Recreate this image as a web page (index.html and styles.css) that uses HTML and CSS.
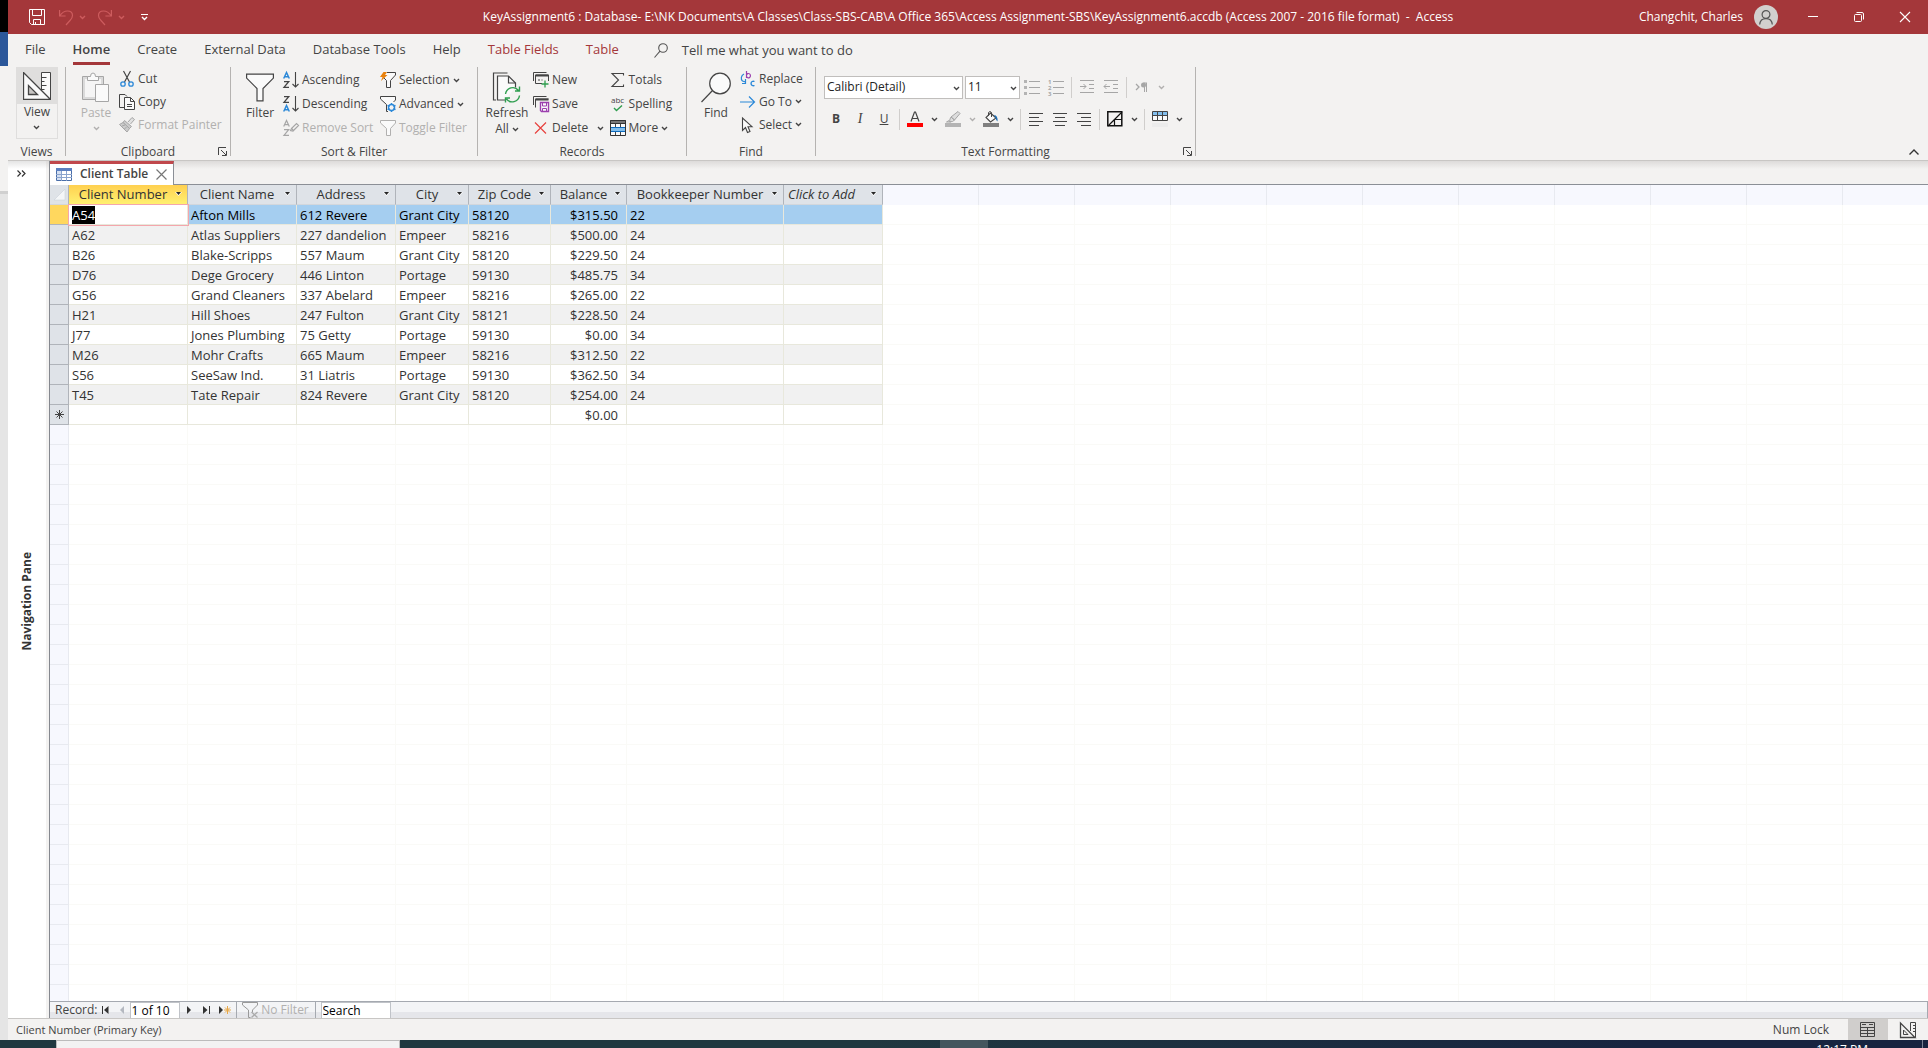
FILE: index.html
```html
<!DOCTYPE html>
<html lang="en">
<head>
    <meta charset="UTF-8">
    <meta name="viewport" content="width=device-width, initial-scale=1.0">
    <title>KeyAssignment6 : Database - Access</title>
    <link rel="stylesheet" href="styles.css">
</head>
<body>
    <!-- shared icons -->
    <svg class="symbols" aria-hidden="true">
        <symbol id="chevron" viewBox="0 0 7 5"><path d="M1 1l2.500 2.500L6 1" fill="none" stroke="currentColor" stroke-width="1.400"/></symbol>
        <symbol id="launcher" viewBox="0 0 9 9"><path d="M.5 8V.5H8M3 3l5 5M8.500 4v4.500H4" fill="none" stroke="currentColor"/></symbol>
        <symbol id="funnel" viewBox="0 0 16 16"><path d="M.5.500h15v2.500l-5 5.500V15.500h-4V8.500l-6-5.500z" fill="#fafafa" stroke="currentColor"/></symbol>
        <symbol id="drop" viewBox="0 0 7 4"><path d="M0 0h7L3.500 4z" fill="#fff"/><path d="M1 0h5L3.500 3z" fill="#262626"/></symbol>
        <symbol id="design" viewBox="0 0 28 28">
            <path d="M18.500.500h9v27h-9z" fill="#fafafa" stroke="currentColor"/>
            <path d="M18.500 5.500h5M18.500 9.500h3M18.500 13.500h5M18.500 17.500h3" stroke="currentColor"/>
            <path d="M.5.500v27h27z" fill="#fafafa" stroke="currentColor" stroke-width="1.300"/>
            <path d="M5.500 13.500v9h9z" fill="#c8c6c4" stroke="currentColor" stroke-width="1.300"/>
        </symbol>
    </svg>

    <div class="screen">
        <div class="behind">
            <div class="behind-title"></div>
            <div class="behind-tab"></div>
            <div class="behind-ribbon"></div>
        </div>

        <div class="app">
            <header class="titlebar">
                <div class="quick-access">
                    <button class="qa-save" aria-label="Save"><svg width="16" height="16" viewBox="0 0 16 16" fill="none" stroke="#fff"><path d="M.5.500h15v15h-13l-2-2z"/><path d="M3.500.500v6h9v-6M4.500 15.500v-5h7v5M6.500 13v2.500"/></svg></button>
                    <button class="qa-undo" aria-label="Undo"><svg width="14" height="17" viewBox="0 0 14 17" fill="none" stroke="#cd5c5e" stroke-width="1.200"><path d="M.6 1v6h6M1 6.500C3 3.500 5.500 2 8.500 2c3.200 0 5 2 5 4.500 0 2-1 3.500-2.500 5L7 16"/></svg></button>
                    <button class="qa-arrow faded" aria-label="Undo list"><svg width="7" height="5"><use href="#chevron"/></svg></button>
                    <button class="qa-undo" aria-label="Redo"><svg width="14" height="17" viewBox="0 0 14 17" fill="none" stroke="#cd5c5e" stroke-width="1.200"><path d="M13.400 1v6h-6M13 6.500C11 3.500 8.500 2 5.500 2c-3.200 0-5 2-5 4.500 0 2 1 3.500 2.500 5L7 16"/></svg></button>
                    <button class="qa-arrow faded" aria-label="Redo list"><svg width="7" height="5"><use href="#chevron"/></svg></button>
                    <button class="qa-more" aria-label="Customize Quick Access Toolbar"><svg width="7" height="7" viewBox="0 0 7 7"><path d="M0 .5h7" stroke="#fff"/><path d="M1 3l2.500 2.500L6 3" fill="none" stroke="#fff" stroke-width="1.400"/></svg></button>
                </div>
                <h1>KeyAssignment6 : Database- E:\NK Documents\A Classes\Class-SBS-CAB\A Office 365\Access Assignment-SBS\KeyAssignment6.accdb (Access 2007 - 2016 file format) &nbsp;- &nbsp;Access</h1>
                <div class="window-controls">
                    <span class="user-name">Changchit, Charles</span>
                    <span class="avatar"><svg width="14" height="15" viewBox="0 0 14 15" fill="none" stroke="#555" stroke-width="1.200"><circle cx="7" cy="4.500" r="3.900"/><path d="M.7 14.500C1 11 3.500 8.600 7 8.600s6 2.400 6.300 5.900"/></svg></span>
                    <button aria-label="Minimize"><svg width="10" height="10" viewBox="0 0 10 10"><path d="M0 4.500h10" stroke="#fff"/></svg></button>
                    <button aria-label="Restore"><svg width="10" height="10" viewBox="0 0 10 10" fill="none" stroke="#fff"><rect x=".5" y="2.500" width="7" height="7" rx="1"/><path d="M2.500.500h5.500q1.500 0 1.500 1.500v5.500"/></svg></button>
                    <button aria-label="Close"><svg width="10" height="10" viewBox="0 0 10 10"><path d="M0 0l10 10M10 0L0 10" stroke="#fff" stroke-width="1.100"/></svg></button>
                </div>
            </header>

            <nav class="ribbon-tabs">
                <a href="#">File</a>
                <a href="#" class="active">Home</a>
                <a href="#">Create</a>
                <a href="#">External Data</a>
                <a href="#">Database Tools</a>
                <a href="#">Help</a>
                <a href="#" class="contextual">Table Fields</a>
                <a href="#" class="contextual">Table</a>
                <a href="#" class="tell-me"><svg width="14" height="15" viewBox="0 0 14 15" fill="none" stroke="#555" stroke-width="1.100"><circle cx="9" cy="5" r="4.300"/><path d="M6 8.200L.5 14.500"/></svg>Tell me what you want to do</a>
            </nav>

            <div class="ribbon">
                <section class="group views">
                    <div class="tools">
                        <button class="view-button">
                            <span class="view-icon"><svg width="28" height="28"><use href="#design"/></svg></span>
                            <span class="view-text">View<svg width="7" height="5"><use href="#chevron"/></svg></span>
                        </button>
                    </div>
                    <h2>Views</h2>
                </section>

                <section class="group clipboard">
                    <div class="tools">
                        <button class="big disabled">
                            <svg width="28" height="31" viewBox="0 0 28 31" stroke="#a6a6a6"><path d="M.5 4.500h21v23H.5z" fill="#dadada"/><path d="M3 7h16v18H3z" fill="#f5f5f5" stroke="none"/><path d="M5.500 8.500v-4h3q0-3.500 2.500-3.500t2.500 3.500h3v4z" fill="#fafafa"/><path d="M13.500 12.500h13v17h-13z" fill="#fafafa"/></svg>
                            <span>Paste</span>
                            <svg class="below" width="7" height="5"><use href="#chevron"/></svg>
                        </button>
                        <div class="stack tight">
                            <button><svg width="16" height="16" viewBox="0 0 16 16" fill="none"><path d="M4.500 0l6 11M11.500 0l-6 11" stroke="#444" stroke-width="1.200"/><circle cx="4" cy="13" r="2.200" stroke="#2b88d8" stroke-width="1.300"/><circle cx="12" cy="13" r="2.200" stroke="#2b88d8" stroke-width="1.300"/></svg>Cut</button>
                            <button><svg width="16" height="16" viewBox="0 0 16 16" stroke="#444"><path d="M5 13.500H.5V.5H6l2 2" fill="none"/><path d="M5.500 3.500h6l4 4v8h-10z" fill="#fafafa"/><path d="M11.500 3.500v4h4M8 10.500h5M8 12.500h5" fill="none"/></svg>Copy</button>
                            <button class="disabled"><svg width="16" height="16" viewBox="0 0 16 16" stroke="#a6a6a6"><path d="M9 5l4-4.500 2.500 2L11.500 7" fill="#e0e0e0"/><path d="M5.500 3.500l7 6-2 2-6.500-6z" fill="#ccc"/><path d="M4 5.500L.5 7.500 8 15l2.500-3.500z" fill="#ccc"/><path d="M3 9l3-1M5.500 11.500l2-1"/></svg>Format Painter</button>
                        </div>
                    </div>
                    <h2>Clipboard</h2>
                    <button class="launch" aria-label="Clipboard pane"><svg width="9" height="9"><use href="#launcher"/></svg></button>
                </section>

                <section class="group sort">
                    <div class="tools">
                        <button class="big">
                            <svg width="28" height="28" viewBox="0 0 28 28"><path d="M.6.600h26.800v4L17 15v12.400h-6V15L.6 4.600z" fill="#fafafa" stroke="#444" stroke-width="1.200"/></svg>
                            <span>Filter</span>
                        </button>
                        <div class="stack">
                            <button><svg width="16" height="16" viewBox="0 0 16 16" fill="none"><path d="M.7 6.500L3.500.500l2.800 6M1.500 4.700h4" stroke="#2b88d8" stroke-width="1.500"/><path d="M1 9.700h4.700L1 15.300h5" stroke="#444" stroke-width="1.300"/><path d="M12.500 0v15M9.500 12l3 3 3-3" stroke="#444" stroke-width="1.100"/></svg>Ascending</button>
                            <button><svg width="16" height="16" viewBox="0 0 16 16" fill="none"><path d="M1 .7h4.700L1 6.300h5" stroke="#444" stroke-width="1.300"/><path d="M.7 15.500l2.800-6 2.800 6M1.500 13.700h4" stroke="#2b88d8" stroke-width="1.500"/><path d="M12.500 0v15M9.500 12l3 3 3-3" stroke="#444" stroke-width="1.100"/></svg>Descending</button>
                            <button class="disabled"><svg width="16" height="16" viewBox="0 0 16 16" fill="none" stroke="#a6a6a6" stroke-width="1.200"><path d="M.7 6.500L3.500.500l2.800 6M1.500 4.700h4M1 9.700h4.700L1 15.300h5"/><path d="M8.500 8.500l5-5 2 2-5.500 5.500-2.500-.5z"/><path d="M8.500 8.500l2 2" /></svg>Remove Sort</button>
                        </div>
                        <div class="stack">
                            <button><svg width="16" height="16" viewBox="0 0 16 16"><path d="M7 .5h8.500v2.500l-5 5.500v7h-4v-7L4 6" fill="#fafafa" stroke="#444"/><path d="M3.500 0h3.500L5 3h2.500L1 9l1.500-4H0z" fill="#e8810c"/></svg>Selection<svg class="arrow" width="7" height="5"><use href="#chevron"/></svg></button>
                            <button><svg width="16" height="16" viewBox="0 0 16 16"><path d="M8 15.500H6.500V8.500L.5 3V.5h15V4l-2 2" fill="#fafafa" stroke="#444"/><circle cx="11.500" cy="11.500" r="3" fill="none" stroke="#2b88d8" stroke-width="1.500"/><path d="M11.500 7v2M11.500 14v2M7.500 9.300l2 1M13.500 12.700l2 1M7.500 13.700l2-1M13.500 10.300l2-1" stroke="#2b88d8" stroke-width="1.500"/></svg>Advanced<svg class="arrow" width="7" height="5"><use href="#chevron"/></svg></button>
                            <button class="disabled"><svg width="16" height="16"><use href="#funnel"/></svg>Toggle Filter</button>
                        </div>
                    </div>
                    <h2>Sort &amp; Filter</h2>
                </section>

                <section class="group records">
                    <div class="tools">
                        <button class="big refresh">
                            <svg width="28" height="30" viewBox="0 0 28 30" fill="none"><path d="M3 27.500H.5V.5h14" stroke="#444" stroke-width="1.200"/><path d="M12 27.500H4.500v-24h11l7 7V15" fill="#fafafa" stroke="#444" stroke-width="1.200"/><path d="M15.500 3.500v7h7" stroke="#444" stroke-width="1.200"/><path d="M12.500 21.500a7.300 7.300 0 0 1 13-3.500M26.500 23a7.300 7.300 0 0 1-13 3.500M26.500 14v4.500H22M12.500 30v-4.500H17" stroke="#2f9e4f" stroke-width="1.400"/></svg>
                            <span>Refresh</span>
                            <span>All<svg width="7" height="5"><use href="#chevron"/></svg></span>
                        </button>
                        <div class="stack">
                            <button><svg width="16" height="16" viewBox="0 0 16 16" fill="none"><path d="M.5 9V.5h13M2.500 11.500v-8.500h13V9" stroke="#444"/><path d="M2.500 3.500h13" stroke="#444" stroke-width="2"/><path d="M9 11.500H2.500M5 8h2M8.500 8h1" stroke="#444"/><path d="M12 8.500v7M8.500 12h7" stroke="#2f9e4f" stroke-width="1.300"/></svg>New</button>
                            <button><svg width="16" height="16" viewBox="0 0 16 16" fill="none"><path d="M.5 9V.5h13M2.500 11.500v-8.500h13" stroke="#444"/><path d="M2.500 3.500h13" stroke="#444" stroke-width="2"/><path d="M7.500 6.500h8v9h-7l-1-1z" fill="#fafafa" stroke="#9b3fae" stroke-width="1.400"/><path d="M9.500 6.500V10h4V6.500M9.500 15v-2.500h4V15" stroke="#9b3fae"/></svg>Save</button>
                            <button><svg width="16" height="16" viewBox="0 0 16 16"><path d="M2 2.500l11 11M13 2.500l-11 11" stroke="#e8433f" stroke-width="1.200"/></svg>Delete<svg class="arrow wide" width="7" height="5"><use href="#chevron"/></svg></button>
                        </div>
                        <div class="stack">
                            <button><svg width="16" height="16" viewBox="0 0 16 16"><path d="M13.500 3.500V1.500H2L8.500 8 2 14.500h11.500v-2" fill="none" stroke="#444" stroke-width="1.100"/></svg>Totals</button>
                            <button><svg width="16" height="16" viewBox="0 0 16 16"><text x="1" y="7" font-size="8" fill="#444">abc</text><path d="M4 12l2.500 2.500L12 9.500" fill="none" stroke="#2f9e4f" stroke-width="1.400"/></svg>Spelling</button>
                            <button><svg width="16" height="16" viewBox="0 0 16 16"><path d="M.5.500h15v15H.5z" fill="#fafafa"/><path d="M0 0h16v3.500H0z" fill="#777"/><path d="M5.500 3.500v12M10.500 3.500v12" stroke="#444"/><path d="M1 7.700h14v3.500H1z" fill="#83beec"/><path d="M0 7.500h16M0 11.500h16" stroke="#0f6cbd"/><path d="M.5.500h15v15H.5zM.5 3.500h15" fill="none" stroke="#333"/></svg>More<svg class="arrow" width="7" height="5"><use href="#chevron"/></svg></button>
                        </div>
                    </div>
                    <h2>Records</h2>
                </section>

                <section class="group find">
                    <div class="tools">
                        <button class="big">
                            <svg width="30" height="30" viewBox="0 0 30 30" stroke="#444" stroke-width="1.200"><circle cx="19" cy="11" r="10.300" fill="#fafafa"/><path d="M11.500 18L.5 29.500"/></svg>
                            <span>Find</span>
                        </button>
                        <div class="stack tight">
                            <button><svg width="16" height="16" viewBox="0 0 16 16" fill="none"><path d="M6.500 0v7M6.500 4.200a2 2.200 0 1 1 0 1" stroke="#9b3fae" stroke-width="1.200"/><path d="M14.500 10.500a2.300 2.300 0 1 0 0 4" stroke="#2b88d8" stroke-width="1.400"/><path d="M4 3C1 4.500.5 8 2.500 10l3 1M5.500 8v4.500H2" stroke="#2b88d8" stroke-width="1.200"/></svg>Replace</button>
                            <button><svg width="16" height="16" viewBox="0 0 16 16"><path d="M0 8h14.500M9 2.500L14.500 8 9 13.500" fill="none" stroke="#2b88d8" stroke-width="1.200"/></svg>Go To<svg class="arrow" width="7" height="5"><use href="#chevron"/></svg></button>
                            <button><svg width="16" height="16" viewBox="0 0 16 16"><path d="M2.500 1v12.500l3-3 2 5 2.500-1-2-4.800h4z" fill="#fafafa" stroke="#444" stroke-width="1.100"/></svg>Select<svg class="arrow" width="7" height="5"><use href="#chevron"/></svg></button>
                        </div>
                    </div>
                    <h2>Find</h2>
                </section>

                <section class="group formatting">
                    <div class="tools format-tools">
                        <div class="format-row">
                            <label class="combo font-name"><select aria-label="Font"><option>Calibri (Detail)</option></select><svg width="7" height="5"><use href="#chevron"/></svg></label>
                            <label class="combo font-size"><select aria-label="Font size"><option>11</option></select><svg width="7" height="5"><use href="#chevron"/></svg></label>
                            <button class="disabled" aria-label="Bullets"><svg width="16" height="16" viewBox="0 0 16 16"><path d="M5 2.500h11M5 8.500h11M5 14.500h11" stroke="#a6a6a6"/><path d="M0 1h3v3H0zM0 7h3v3H0zM0 13h3v3H0z" fill="#b4b4b4"/></svg></button>
                            <button class="disabled" aria-label="Numbering"><svg width="16" height="16" viewBox="0 0 16 16"><path d="M5 2.500h11M5 8.500h11M5 14.500h11" stroke="#a6a6a6"/><g font-size="6" font-weight="bold" fill="#a6a6a6"><text x="0" y="5">1</text><text x="0" y="11">2</text><text x="0" y="17">3</text></g></svg></button>
                            <i class="rule"></i>
                            <button class="disabled" aria-label="Increase indent"><svg width="14" height="14" viewBox="0 0 14 14" fill="none" stroke="#a6a6a6"><path d="M0 .5h14M9 4.500h5M9 8.500h5M0 12.500h14M0 6.500h6M3.500 4L6 6.500 3.500 9"/></svg></button>
                            <button class="disabled" aria-label="Decrease indent"><svg width="14" height="14" viewBox="0 0 14 14" fill="none" stroke="#a6a6a6"><path d="M0 .5h14M9 4.500h5M9 8.500h5M0 12.500h14M0 6.500h6M2.500 4L0 6.500 2.500 9"/></svg></button>
                            <i class="rule"></i>
                            <button class="disabled" aria-label="Text direction"><svg width="14" height="10" viewBox="0 0 14 10"><path d="M1 2l3 3-3 3" fill="none" stroke="#a6a6a6" stroke-width="1.300"/><path d="M8.500 1H12M9.500 1v9M11.500 1v9" stroke="#a6a6a6"/><circle cx="8.500" cy="3" r="2.500" fill="#a6a6a6"/></svg></button>
                            <button class="pick disabled" aria-label="Text direction list"><svg width="7" height="5"><use href="#chevron"/></svg></button>
                        </div>
                        <div class="format-row">
                            <button aria-label="Bold"><b>B</b></button>
                            <button aria-label="Italic"><em>I</em></button>
                            <button aria-label="Underline"><u>U</u></button>
                            <i class="rule"></i>
                            <button aria-label="Font color"><svg width="16" height="16" viewBox="0 0 16 16"><path d="M4 10.500L7.500 1h1L12 10.500M5 7.500h6" fill="none" stroke="#444" stroke-width="1.200"/><path d="M0 12h16v4H0z" fill="#f00"/></svg></button>
                            <button class="pick" aria-label="Font color list"><svg width="7" height="5"><use href="#chevron"/></svg></button>
                            <button class="disabled" aria-label="Highlight"><svg width="16" height="16" viewBox="0 0 16 16"><path d="M6 6l7-5.500 2 2L9.500 9zM6 6l3.500 3-2 1.500-3 .3L5 8zM4 9.500L1.500 11H6" fill="#ddd" stroke="#a6a6a6"/><path d="M0 12h16v4H0z" fill="#b4b4b4"/></svg></button>
                            <button class="pick disabled" aria-label="Highlight list"><svg width="7" height="5"><use href="#chevron"/></svg></button>
                            <button aria-label="Background color"><svg width="16" height="16" viewBox="0 0 16 16"><path d="M7.500 2L13 7l-5.500 4L3 6.500z" fill="#fafafa" stroke="#444" stroke-width="1.100"/><path d="M5.500 5V1.500q1.500-2 3 0V6" fill="none" stroke="#444"/><path d="M11 4q4 0 3.500 6.500-1.500-1-2-3.500z" fill="#1f6fb5"/><path d="M0 12h16v4H0z" fill="#808080"/></svg></button>
                            <button class="pick" aria-label="Background color list"><svg width="7" height="5"><use href="#chevron"/></svg></button>
                            <i class="rule"></i>
                            <button aria-label="Align left"><svg width="14" height="13" viewBox="0 0 14 13" stroke="#444"><path d="M0 .5h14M0 4.500h10M0 8.500h14M0 12.500h10"/></svg></button>
                            <button aria-label="Center"><svg width="14" height="13" viewBox="0 0 14 13" stroke="#444"><path d="M0 .5h14M2 4.500h10M0 8.500h14M2 12.500h10"/></svg></button>
                            <button aria-label="Align right"><svg width="14" height="13" viewBox="0 0 14 13" stroke="#444"><path d="M0 .5h14M4 4.500h10M0 8.500h14M4 12.500h10"/></svg></button>
                            <i class="rule"></i>
                            <button aria-label="Gridlines"><svg width="16" height="16" viewBox="0 0 16 16" fill="none" stroke="#111"><path d="M.8.800h14v14H.8z" stroke-width="1.500"/><path d="M1 15L15 1M7.500 8v7M7.500 8.500H15" stroke-width="1.200"/></svg></button>
                            <button class="pick" aria-label="Gridlines list"><svg width="7" height="5"><use href="#chevron"/></svg></button>
                            <i class="rule"></i>
                            <button aria-label="Alternate row color"><svg width="16" height="16" viewBox="0 0 16 16"><path d="M.5 1h15v9H.5z" fill="#fafafa"/><path d="M0 1h16v4H0z" fill="#83beec"/><path d="M.5.500h15v9H.5zM.5 4.500h15M5.500.500v9M10.500.500v9" fill="none" stroke="#444"/><path d="M0 12h16v4H0z" fill="#ececec"/></svg></button>
                            <button class="pick" aria-label="Alternate row color list"><svg width="7" height="5"><use href="#chevron"/></svg></button>
                        </div>
                    </div>
                    <h2>Text Formatting</h2>
                    <button class="launch" aria-label="Datasheet formatting"><svg width="9" height="9"><use href="#launcher"/></svg></button>
                </section>

                <button class="collapse" aria-label="Collapse the ribbon"><svg width="10" height="6" viewBox="0 0 10 6"><path d="M.5 5.500L5 1l4.500 4.500" fill="none" stroke="#333" stroke-width="1.400"/></svg></button>
            </div>

            <main class="workspace">
                <aside class="nav-pane">
                    <button aria-label="Open navigation pane"><svg width="9" height="7" viewBox="0 0 9 7"><path d="M.5.500l3 3-3 3M5 .5l3 3-3 3" fill="none" stroke="#333" stroke-width="1.200"/></svg></button>
                    <div class="nav-title"><span>Navigation Pane</span></div>
                </aside>

                <div class="document">
                    <div class="doc-tabs">
                        <div class="doc-tab">
                            <svg width="16" height="13" viewBox="0 0 16 13"><path d="M.5.500h15v12H.5z" fill="#fff" stroke="#4a6ea8"/><path d="M0 0h16v3H0z" fill="#5b7fc0"/><path d="M1 3h4v9H1z" fill="#d5e0f2"/><path d="M0 6.500h16M0 9.500h16M5.500 3v10M10.500 3v10" stroke="#8aa3cd"/></svg>
                            <span>Client Table</span>
                            <button aria-label="Close Client Table"><svg width="11" height="11" viewBox="0 0 11 11"><path d="M.5.500l10 10M10.500.500l-10 10" stroke="#777" stroke-width="1.200"/></svg></button>
                        </div>
                    </div>

                    <div class="datasheet">
                        <div class="sheet-top">
                            <table>
                                <colgroup>
                                    <col class="c-select"><col class="c-number"><col class="c-name"><col class="c-address"><col class="c-city"><col class="c-zip"><col class="c-balance"><col class="c-keeper"><col class="c-add">
                                </colgroup>
                                <thead>
                                    <tr>
                                        <th class="corner"><svg width="11" height="11" viewBox="0 0 11 11"><path d="M11 0v11H0z" fill="#f4f6f8" stroke="#c4ccd6" stroke-width=".5"/></svg></th>
                                        <th class="current"><div><span>Client Number</span><svg width="7" height="4"><use href="#drop"/></svg></div></th>
                                        <th><div><span>Client Name</span><svg width="7" height="4"><use href="#drop"/></svg></div></th>
                                        <th><div><span>Address</span><svg width="7" height="4"><use href="#drop"/></svg></div></th>
                                        <th><div><span>City</span><svg width="7" height="4"><use href="#drop"/></svg></div></th>
                                        <th><div><span>Zip Code</span><svg width="7" height="4"><use href="#drop"/></svg></div></th>
                                        <th><div><span>Balance</span><svg width="7" height="4"><use href="#drop"/></svg></div></th>
                                        <th><div><span>Bookkeeper Number</span><svg width="7" height="4"><use href="#drop"/></svg></div></th>
                                        <th class="add"><div><span>Click to Add</span><svg width="7" height="4"><use href="#drop"/></svg></div></th>
                                    </tr>
                                </thead>
                                <tbody>
                                    <tr class="selected"><th></th><td class="editing"><mark>A54</mark></td><td>Afton Mills</td><td>612 Revere</td><td>Grant City</td><td>58120</td><td class="money">$315.50</td><td>22</td><td></td></tr>
                                    <tr><th></th><td>A62</td><td>Atlas Suppliers</td><td>227 dandelion</td><td>Empeer</td><td>58216</td><td class="money">$500.00</td><td>24</td><td></td></tr>
                                    <tr><th></th><td>B26</td><td>Blake-Scripps</td><td>557 Maum</td><td>Grant City</td><td>58120</td><td class="money">$229.50</td><td>24</td><td></td></tr>
                                    <tr><th></th><td>D76</td><td>Dege Grocery</td><td>446 Linton</td><td>Portage</td><td>59130</td><td class="money">$485.75</td><td>34</td><td></td></tr>
                                    <tr><th></th><td>G56</td><td>Grand Cleaners</td><td>337 Abelard</td><td>Empeer</td><td>58216</td><td class="money">$265.00</td><td>22</td><td></td></tr>
                                    <tr><th></th><td>H21</td><td>Hill Shoes</td><td>247 Fulton</td><td>Grant City</td><td>58121</td><td class="money">$228.50</td><td>24</td><td></td></tr>
                                    <tr><th></th><td>J77</td><td>Jones Plumbing</td><td>75 Getty</td><td>Portage</td><td>59130</td><td class="money">$0.00</td><td>34</td><td></td></tr>
                                    <tr><th></th><td>M26</td><td>Mohr Crafts</td><td>665 Maum</td><td>Empeer</td><td>58216</td><td class="money">$312.50</td><td>22</td><td></td></tr>
                                    <tr><th></th><td>S56</td><td>SeeSaw Ind.</td><td>31 Liatris</td><td>Portage</td><td>59130</td><td class="money">$362.50</td><td>34</td><td></td></tr>
                                    <tr><th></th><td>T45</td><td>Tate Repair</td><td>824 Revere</td><td>Grant City</td><td>58120</td><td class="money">$254.00</td><td>24</td><td></td></tr>
                                    <tr class="new-row"><th><svg width="9" height="9" viewBox="0 0 9 9"><path d="M4.500 0v9M0 4.500h9M1.500 1.500l6 6M7.500 1.500l-6 6" stroke="#444"/></svg></th><td></td><td></td><td></td><td></td><td></td><td class="money">$0.00</td><td></td><td></td></tr>
                                </tbody>
                            </table>
                            <div class="blank-right"></div>
                        </div>
                        <div class="sheet-blank">
                            <i class="c-select"></i><i class="c-number"></i><i class="c-name"></i><i class="c-address"></i><i class="c-city"></i><i class="c-zip"></i><i class="c-balance"></i><i class="c-keeper"></i><i class="c-add"></i><i class="rest"></i>
                        </div>
                    </div>

                    <div class="record-bar">
                        <label for="record">Record:</label>
                        <button class="narrow" aria-label="First record"><svg width="7" height="8" viewBox="0 0 7 8"><path d="M0 0h1v8H0zM6.500 0v8L2 4z" fill="#333"/></svg></button>
                        <button class="narrow" aria-label="Previous record"><svg width="4" height="8" viewBox="0 0 4 8"><path d="M4 0v8L0 4z" fill="#b4b8c0"/></svg></button>
                        <input id="record" class="record-input" type="text" value="1 of 10">
                        <button aria-label="Next record"><svg width="4" height="8" viewBox="0 0 4 8"><path d="M0 0v8l4-4z" fill="#333"/></svg></button>
                        <button aria-label="Last record"><svg width="7" height="8" viewBox="0 0 7 8"><path d="M6 0h1v8H6zM0 0v8l4.500-4z" fill="#333"/></svg></button>
                        <button aria-label="New record"><svg width="12" height="8" viewBox="0 0 12 8"><path d="M0 0v8l4-4z" fill="#333"/><path d="M8.500 0v8M5 4h7M6 1.500l5 5M11 1.500l-5 5" stroke="#e8a848"/></svg></button>
                        <button class="no-filter"><svg width="16" height="16" viewBox="0 0 16 16"><path d="M.5.500h15v2.500l-5 5v2M6.500 15.500h2M.5.500V3l6 5v7.500" fill="none" stroke="#999"/><path d="M9.500 10l6 5.500M15.500 10l-6 5.500" stroke="#aaa" stroke-width="1.300"/></svg>No Filter</button>
                        <input class="search-input" type="text" value="Search" aria-label="Search">
                    </div>
                </div>
            </main>

            <footer class="status-bar">
                <span>Client Number (Primary Key)</span>
                <span class="num-lock">Num Lock</span>
                <button class="on" aria-label="Datasheet View"><svg width="16" height="16" viewBox="0 0 16 16" fill="none" stroke="#444"><path d="M.5.500h14v14H.5zM.5 5.500h14M.5 8.500h14M.5 11.500h14M7.500 5v10M2 2.500h4M9 2.500h4"/></svg></button>
                <button aria-label="Design View"><svg width="16" height="16" viewBox="0 0 16 16" fill="none" stroke="#444"><path d="M10.500 9V.5h5v15M13 3.500h2M13 6.500h2M13 9.500h2"/><path d="M.5 1v14.500H15z" stroke-width="1.300"/><path d="M3.500 8v4.500H8z"/></svg></button>
            </footer>
        </div>
    </div>

    <div class="taskbar">
        <div class="taskbar-search"></div>
        <div class="taskbar-apps"><div class="taskbar-active"></div></div>
        <time>12:17 PM</time>
        <div class="show-desktop"></div>
    </div>
</body>
</html>
```
FILE: styles.css
```css
* {
    box-sizing: border-box;
}

body {
    margin: 0;
    height: 100vh;
    overflow: hidden;
    display: flex;
    flex-direction: column;
    font-family: "Open Sans", "Noto Sans", sans-serif;
    font-size: 12px;
    line-height: 16px;
    color: #444;
}

button {
    display: flex;
    align-items: center;
    justify-content: center;
    margin: 0;
    padding: 0;
    border: 0;
    background: none;
    font: inherit;
    color: inherit;
    white-space: nowrap;
}

h1, h2 {
    margin: 0;
    font-size: 12px;
    font-weight: normal;
}

svg {
    flex: none;
    overflow: visible;
}

.symbols {
    display: none;
}

.disabled {
    color: #b1b0af;
}

.screen {
    flex: 1;
    min-height: 0;
    display: flex;
}

/* window behind */
.behind {
    width: 8px;
    background: #e5e5e5;
}

.behind-title {
    height: 32px;
    background: #000;
}

.behind-tab {
    height: 34px;
    background: #2b579a;
}

.behind-ribbon {
    height: 128px;
    background: #f3f2f1;
    border-bottom: 3px solid #d0d0d0;
}

.app {
    flex: 1;
    min-width: 0;
    display: flex;
    flex-direction: column;
    background: #f3f2f1;
}

/* title bar */
.titlebar {
    height: 34px;
    display: grid;
    grid-template-columns: 1fr auto 1fr;
    align-items: center;
    background: #a4373a;
    color: #fff;
}

.quick-access {
    display: flex;
    align-items: center;
    padding-left: 21px;
}

.qa-save {
    margin-right: 14px;
}

.qa-arrow {
    width: 19px;
    margin-right: 6px;
}

.faded {
    color: #cd5c5e;
}

.qa-more {
    margin-left: 4px;
}

.window-controls {
    display: flex;
    align-items: center;
    justify-content: flex-end;
}

.window-controls button {
    width: 46px;
    height: 34px;
}

.avatar {
    width: 24px;
    height: 24px;
    margin: 0 12px 0 11px;
    display: flex;
    align-items: center;
    justify-content: center;
    border-radius: 50%;
    background: #d2d0ce;
}

/* ribbon */
.ribbon-tabs {
    height: 33px;
    padding-left: 17px;
    display: flex;
    align-items: center;
    gap: 27px;
    font-size: 13px;
}

.ribbon-tabs a {
    height: 28px;
    padding-top: 2px;
    line-height: 20px;
    border-bottom: 3px solid transparent;
    color: #444;
    text-decoration: none;
    white-space: nowrap;
}

.ribbon-tabs .active {
    font-weight: 600;
    border-color: #a4373a;
}

.ribbon-tabs .contextual {
    color: #a4373a;
}

.ribbon-tabs .tell-me {
    margin-left: 8px;
    display: flex;
    align-items: center;
    gap: 14px;
}

.ribbon {
    height: 94px;
    padding-bottom: 4px;
    display: flex;
    border-bottom: 1px solid #c8c6c4;
}

.group {
    position: relative;
    display: flex;
    flex-direction: column;
    border-right: 1px solid #b5b3b1;
}

.group h2 {
    height: 8px;
    line-height: 8px;
    text-align: center;
}

.tools {
    flex: 1;
    display: flex;
    align-items: flex-start;
}

.views { width: 58px; }
.clipboard { width: 165px; }
.sort { width: 247px; }
.records { width: 209px; }
.find { width: 129px; }
.formatting { width: 380px; }

.views .tools {
    padding-left: 8px;
}

.view-button {
    flex-direction: column;
    width: 42px;
    height: 72px;
    border: 1px solid #dfdedd;
}

.view-icon {
    height: 36px;
    width: 40px;
    display: flex;
    align-items: center;
    justify-content: center;
    background: #dfdedd;
}

.view-text {
    flex: 1;
    display: flex;
    flex-direction: column;
    align-items: center;
    gap: 5px;
}

.big {
    width: 42px;
    height: 72px;
    padding-top: 5px;
    flex-direction: column;
    justify-content: flex-start;
}

.big span {
    display: flex;
    align-items: center;
    gap: 3px;
}

.big > svg:first-child {
    height: 33px;
    padding-bottom: 2px;
}

.below {
    margin-top: 5px;
}

.stack {
    display: flex;
    flex-direction: column;
    align-items: flex-start;
    padding-top: 1px;
}

.stack button {
    height: 24px;
    gap: 3px;
}

.stack.tight {
    padding-top: 0;
}

.stack.tight button {
    height: 23px;
}

.arrow.wide {
    margin-left: 6px;
}

.clipboard .tools { padding-left: 9px; }
.clipboard .big { margin-right: 2px; }
.sort .tools { padding-left: 8px; }
.sort .stack { width: 97px; }
.sort .big { margin-right: 2px; }
.records .tools { padding-left: 6px; }
.records .stack { width: 78px; }
.records .big { width: 47px; margin-right: 3px; }
.find .tools { padding-left: 8px; }
.find .big { margin-right: 3px; }

.launch {
    position: absolute;
    right: 3px;
    bottom: 0;
}

.format-tools {
    flex-direction: column;
    padding: 8px 0 0 8px;
}

.format-row {
    height: 24px;
    margin-bottom: 8px;
    display: flex;
    align-items: center;
}

.format-row button {
    width: 24px;
    height: 24px;
}

.format-row .pick {
    width: 14px;
}

.format-row em {
    font-family: "Liberation Serif", serif;
    font-size: 14px;
}

.rule {
    width: 1px;
    height: 21px;
    margin: 0 3px;
    background: #d0cecc;
}

.combo {
    position: relative;
    display: flex;
    margin-right: 2px;
}

.combo select {
    width: 100%;
    height: 23px;
    padding: 0 2px;
    appearance: none;
    border: 1px solid #c0bebc;
    border-radius: 0;
    background: #fff;
    font: inherit;
    color: #222;
}

.combo svg {
    position: absolute;
    right: 3px;
    top: 10px;
}

.font-name { width: 139px; }
.font-size { width: 55px; margin-right: 0; }

.collapse {
    margin: auto 8px 0 auto;
    width: 12px;
    height: 8px;
}

/* workspace */
.workspace {
    flex: 1;
    min-height: 0;
    display: flex;
    background: linear-gradient(#dddbda, #f3f2f1 8px);
}

.nav-pane {
    width: 38px;
    display: flex;
    flex-direction: column;
    background: linear-gradient(#e4e4e4, #fff 8px);
}

.nav-pane button {
    height: 24px;
    width: 26px;
}

.nav-title {
    flex: 1;
    display: flex;
    align-items: center;
    justify-content: center;
    font-size: 12px;
    font-weight: bold;
    color: #333;
}

.nav-title span {
    writing-mode: vertical-rl;
    rotate: 180deg;
}

.document {
    flex: 1;
    min-width: 0;
    margin-left: 3px;
    display: flex;
    flex-direction: column;
    border-left: 1px solid #85888f;
}

.doc-tabs {
    height: 24px;
    display: flex;
    border-bottom: 1px solid #8b8f96;
}

.doc-tab {
    height: 24px;
    padding: 0 6px;
    display: flex;
    align-items: center;
    border-top: 3px solid #c0484c;
    border-right: 1px solid #8b8f96;
    background: #fff;
    font-size: 12px;
    font-weight: 600;
}

.doc-tab span {
    margin: 0 8px;
    line-height: 14px;
    padding-bottom: 2px;
}

/* datasheet */
.datasheet {
    flex: 1;
    min-height: 0;
    display: flex;
    flex-direction: column;
    overflow: hidden;
    background: #fff;
    font-size: 13px;
}

.sheet-top {
    display: flex;
}

table {
    width: 833px;
    flex: none;
    table-layout: fixed;
    border-collapse: separate;
    border-spacing: 0;
}

.c-select { width: 19px; }
.c-number { width: 119px; }
.c-name { width: 109px; }
.c-address { width: 99px; }
.c-city { width: 73px; }
.c-zip { width: 82px; }
.c-balance { width: 76px; }
.c-keeper { width: 157px; }
.c-add { width: 99px; }

td, th {
    height: 20px;
    padding: 0 3px;
    line-height: 18px;
    border-right: 1px solid #e8e8dc;
    border-bottom: 1px solid #e8e8dc;
    white-space: nowrap;
    color: #333;
}

th {
    padding: 0;
    font-weight: normal;
    background: #dfe3e8;
    border-color: #b0b4ba;
}

thead th {
    border-bottom-color: #d3d7dc;
}

thead div {
    display: flex;
    align-items: center;
    padding: 0 5px 2px 2px;
    line-height: 16px;
}

thead span {
    flex: 1;
    text-align: center;
}

.corner svg {
    display: block;
    margin-left: 4px;
}

.current {
    background: linear-gradient(#ffd050, #fff070);
}

.add {
    font-style: italic;
}

.add span {
    text-align: left;
    padding-left: 2px;
}

tbody tr:nth-child(even) td {
    background: #f1f1f1;
}

tbody .selected td {
    background: #a5cef0;
    color: #000;
}

.selected th {
    background: #ffd75e;
}

tbody .selected .editing {
    background: #fff;
    outline: 1px solid #f4a6ac;
}

mark {
    display: inline-block;
    background: #000;
    color: #fff;
}

.money {
    text-align: right;
    padding-right: 8px;
}

.new-row th svg {
    display: block;
    margin: 0 auto;
}

/* empty columns are 96px wide */
.blank-right {
    flex: 1;
    background:
        repeating-linear-gradient(90deg, transparent 0 95px, #fafaf7 95px 96px),
        repeating-linear-gradient(transparent 0 19px, #fafaf7 19px 20px);
}

.blank-right::before {
    content: "";
    display: block;
    height: 20px;
    background: repeating-linear-gradient(90deg, #f7f8fe 0 95px, #e8eaf0 95px 96px);
}

.sheet-blank {
    flex: 1;
    display: flex;
    background: repeating-linear-gradient(transparent 0 19px, #fafaf7 19px 20px);
}

.sheet-blank i {
    flex: none;
    border-right: 1px solid #fafaf7;
}

.sheet-blank .c-select {
    border-color: #e8eaf0;
    background: repeating-linear-gradient(#f7f8fe 0 19px, #e8eaf0 19px 20px);
}

.sheet-blank .rest {
    flex: 1;
    border: 0;
    background: repeating-linear-gradient(90deg, transparent 0 95px, #fafaf7 95px 96px);
}

.record-bar {
    height: 17px;
    padding-left: 5px;
    display: flex;
    align-items: center;
    border-top: 1px solid #a5a9b0;
    border-right: 1px solid #a5a9b0;
    background: linear-gradient(#f3f4f6 60%, #e5e6ea 60%);
}

.record-bar button {
    width: 18px;
    height: 16px;
}

.record-bar .narrow {
    width: 16px;
}

.record-bar input {
    height: 16px;
    padding: 0 1px;
    border: 1px solid #c0c3c8;
    border-bottom: 0;
    background: #fff;
    font: inherit;
    color: #000;
}

.record-input {
    width: 50px;
}

.record-bar .no-filter {
    width: 80px;
    margin: 0 5px 0 2px;
    gap: 3px;
    border-left: 1px solid #a5a9b0;
    border-right: 1px solid #a5a9b0;
    color: #b1b0af;
}

.search-input {
    width: 70px;
}

/* status bar */
.status-bar {
    height: 22px;
    padding-left: 8px;
    display: flex;
    align-items: center;
    border-top: 1px solid #c8c6c4;
    font-size: 11px;
}

.num-lock {
    margin: 0 19px 0 auto;
    font-size: 12px;
}

.status-bar button {
    width: 40px;
    height: 21px;
}

.status-bar .on {
    background: #d0cecc;
}

.taskbar {
    height: 8px;
    overflow: hidden;
    display: flex;
    background: linear-gradient(90deg, #203840 0 45%, #182440 85%);
}

.taskbar-search {
    width: 344px;
    margin-left: 56px;
    border: 1px solid #bbb;
    border-bottom: 0;
    background: #f2f2f2;
}

.taskbar-apps {
    flex: 1;
    display: flex;
    padding-left: 540px;
}

.taskbar-active {
    width: 48px;
    background: #44565e;
}

time {
    padding: 2px 54px 0 0;
    color: #fff;
}

.show-desktop {
    width: 6px;
    border-left: 1px solid #7a8294;
}
```
